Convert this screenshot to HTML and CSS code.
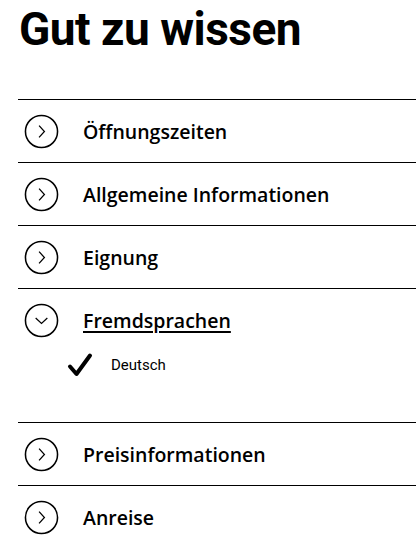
FILE: index.html
```html
<!DOCTYPE html>
<html lang="de">

<head>
    <meta charset="UTF-8">
    <meta name="viewport" content="width=device-width, initial-scale=1.0">
    <title>Gut zu wissen</title>
    <link rel="stylesheet" href="styles.css">
</head>

<body>
    <div class="container">
        <h1>Gut zu wissen</h1>
        <div class="accordion">
            <div class="item">
                <div class="item-head">
                    <span class="toggle">
                        <svg viewBox="0 0 36 36"><circle cx="18" cy="18" r="16.5" /><path d="M15.5 12 L21 18 L15.5 24" /></svg>
                    </span>
                    <span class="label">Öffnungszeiten</span>
                </div>
            </div>
            <div class="item">
                <div class="item-head">
                    <span class="toggle">
                        <svg viewBox="0 0 36 36"><circle cx="18" cy="18" r="16.5" /><path d="M15.5 12 L21 18 L15.5 24" /></svg>
                    </span>
                    <span class="label">Allgemeine Informationen</span>
                </div>
            </div>
            <div class="item">
                <div class="item-head">
                    <span class="toggle">
                        <svg viewBox="0 0 36 36"><circle cx="18" cy="18" r="16.5" /><path d="M15.5 12 L21 18 L15.5 24" /></svg>
                    </span>
                    <span class="label">Eignung</span>
                </div>
            </div>
            <div class="item open">
                <div class="item-head">
                    <span class="toggle">
                        <svg viewBox="0 0 36 36"><circle cx="18" cy="18" r="16.5" /><path d="M12 15.5 L18 21 L24 15.5" /></svg>
                    </span>
                    <span class="label">Fremdsprachen</span>
                </div>
                <div class="item-body">
                    <div class="lang">
                        <svg class="check" viewBox="0 0 26 26"><path d="M3 14.5 L9.5 22 L23 3.5" /></svg>
                        <span>Deutsch</span>
                    </div>
                </div>
            </div>
            <div class="item">
                <div class="item-head">
                    <span class="toggle">
                        <svg viewBox="0 0 36 36"><circle cx="18" cy="18" r="16.5" /><path d="M15.5 12 L21 18 L15.5 24" /></svg>
                    </span>
                    <span class="label">Preisinformationen</span>
                </div>
            </div>
            <div class="item">
                <div class="item-head">
                    <span class="toggle">
                        <svg viewBox="0 0 36 36"><circle cx="18" cy="18" r="16.5" /><path d="M15.5 12 L21 18 L15.5 24" /></svg>
                    </span>
                    <span class="label">Anreise</span>
                </div>
            </div>
        </div>
    </div>
</body>

</html>
```

FILE: styles.css
```css
/* Reset styles */
* {
    margin: 0;
    padding: 0;
    box-sizing: border-box;
}

body {
    font-family: "Open Sans", "Liberation Sans", sans-serif;
    background-color: #fff;
    color: #000;
}

.container {
    padding-left: 18px;
}

h1 {
    font-family: Roboto, "Liberation Sans", sans-serif;
    font-size: 46px;
    font-weight: 700;
    line-height: 54px;
    margin-top: 2px;
    margin-bottom: 43px;
    padding-left: 1px;
    letter-spacing: -0.5px;
}

/* Accordion */
.item {
    border-top: 1px solid #000;
}

.item-head {
    display: flex;
    align-items: center;
    height: 62px;
    padding-left: 6px;
    gap: 24px;
    cursor: pointer;
}

.toggle {
    display: flex;
    width: 35px;
    height: 35px;
}

.toggle svg {
    width: 35px;
    height: 35px;
    fill: none;
    stroke: #000;
    stroke-width: 1.6;
}

.toggle path {
    stroke-width: 1.3;
}

.label {
    font-size: 19.5px;
    font-weight: 600;
}

.open .label {
    text-decoration: underline;
    text-decoration-thickness: 2px;
    text-underline-offset: 3px;
}

.item-body {
    padding: 1px 0 44px 49px;
}

.lang {
    display: flex;
    align-items: center;
    gap: 18px;
    font-family: Roboto, "Liberation Sans", sans-serif;
    font-size: 15px;
    height: 26px;
}

.check {
    width: 26px;
    height: 26px;
    fill: none;
    stroke: #000;
    stroke-width: 4;
    stroke-linecap: round;
    stroke-linejoin: round;
}
```
